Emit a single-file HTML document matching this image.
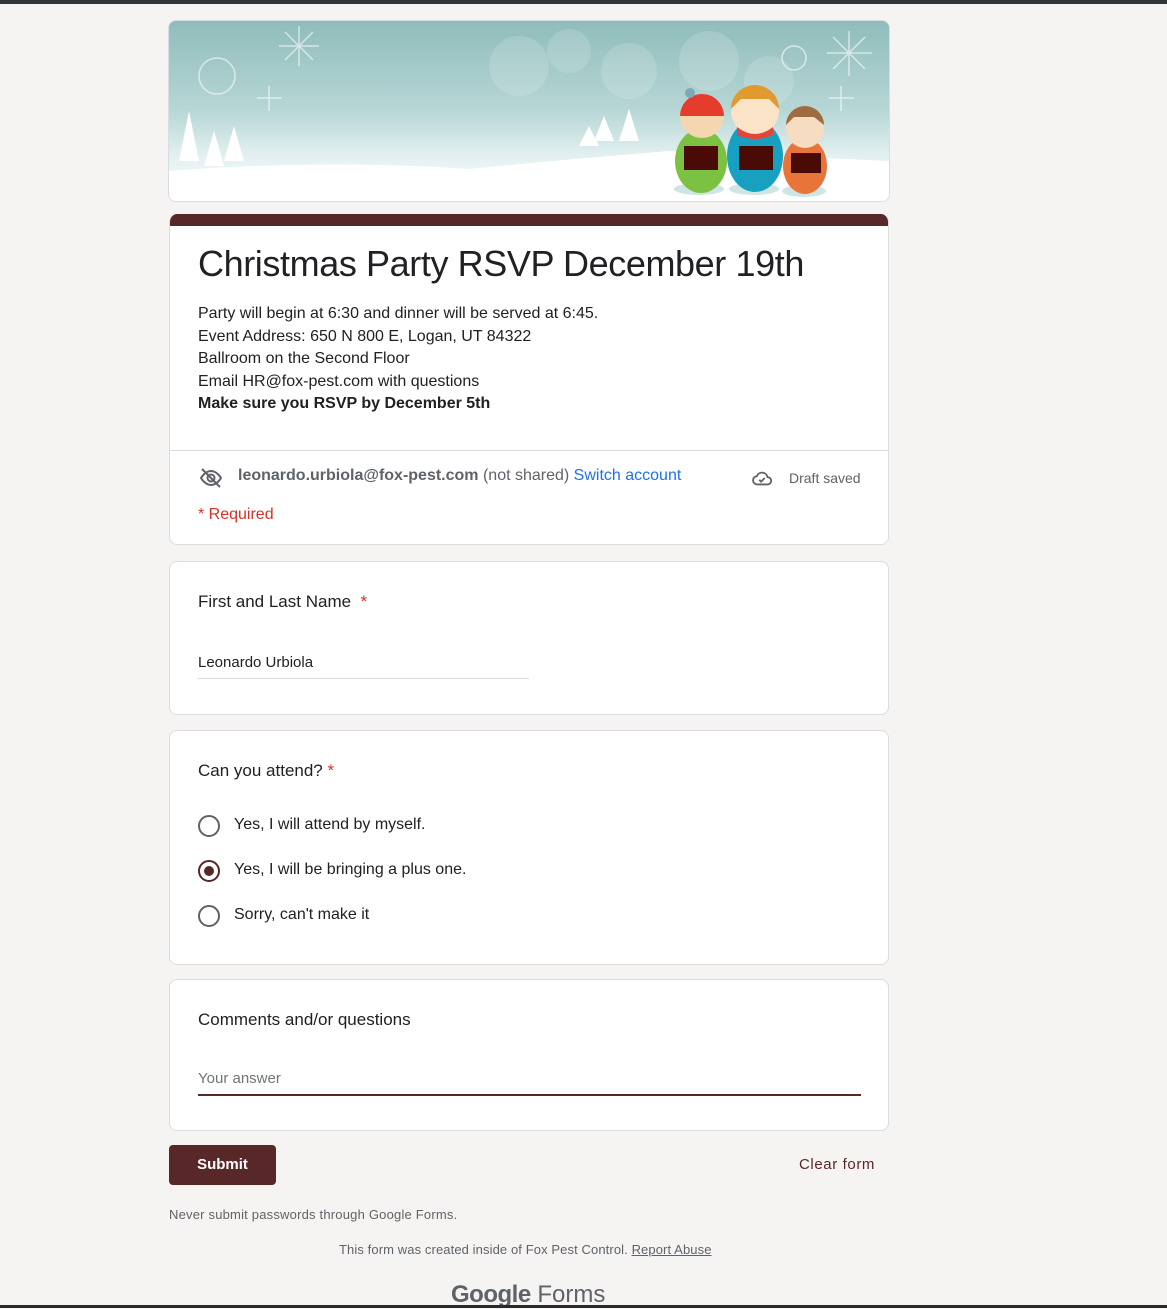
<!DOCTYPE html>
<html><head><style>
body{margin:0;background:#f6f4f2;font-family:"Liberation Sans",sans-serif;color:#202124;width:1167px;height:1308px;position:relative;overflow:hidden}
.top{position:absolute;left:0;top:0;width:1167px;height:4px;background:#343538}
.bot{position:absolute;left:0;top:1305px;width:1167px;height:3px;background:#2a2a2c}
.hdr{position:absolute;left:168px;top:20px;width:720px;height:180px;border:1px solid #dadce0;border-radius:8px;overflow:hidden;background:linear-gradient(#8fbcbb 0%,#b7d7d6 50%,#e3f0f0 75%,#fff 100%)}
.card{position:absolute;left:169px;width:718px;background:#fff;border:1px solid #dadce0;border-radius:8px}
.a{position:absolute;font-size:16px}
.req{color:#d93025}
.radio{position:absolute;left:28px;width:18px;height:18px;border:2px solid #5f6368;border-radius:50%}
</style></head><body>
<div class="top"></div>
<div class="hdr">
<svg width="720" height="180" style="position:absolute;left:0;top:0">
<g fill="#fff" opacity=".15"><circle cx="350" cy="45" r="30"/><circle cx="400" cy="30" r="22"/><circle cx="460" cy="50" r="28"/><circle cx="540" cy="40" r="30"/><circle cx="600" cy="60" r="25"/></g>
<path d="M0 150 Q150 138 300 148 Q380 140 500 130 L720 140 L720 180 L0 180Z" fill="#fff"/>
<g fill="#fff"><polygon points="20,90 10,140 30,140"/><polygon points="45,110 35,145 55,145"/><polygon points="65,105 55,140 75,140"/><polygon points="420,105 410,125 430,125"/><polygon points="435,95 425,120 445,120"/><polygon points="460,88 450,120 470,120"/></g>
<g stroke="#fff" stroke-width="1.5" fill="none" opacity=".6"><circle cx="48" cy="55" r="18"/><path d="M130 5v40M110 25h40M116 11l28 28M144 11l-28 28"/><path d="M100 65v25M88 77h25"/><circle cx="625" cy="37" r="12"/><path d="M680 10v45M658 32h45M664 16l32 32M696 16l-32 32"/><path d="M672 65v25M660 77h25"/></g>
<ellipse cx="530" cy="168" rx="25" ry="6" fill="#cfe5e4"/><ellipse cx="585" cy="168" rx="25" ry="6" fill="#cfe5e4"/><ellipse cx="635" cy="170" rx="22" ry="6" fill="#cfe5e4"/>
<ellipse cx="532" cy="140" rx="26" ry="32" fill="#7cc142"/><ellipse cx="586" cy="135" rx="28" ry="36" fill="#17a0bf"/><ellipse cx="636" cy="145" rx="22" ry="28" fill="#e8743a"/>
<circle cx="533" cy="95" r="22" fill="#f4d6b0"/><path d="M511 95 A22 22 0 0 1 555 95Z" fill="#e53c2e"/><circle cx="521" cy="72" r="5" fill="#7ea8b8"/>
<circle cx="586" cy="90" r="24" fill="#fbe3c8"/><path d="M562 88 A24 24 0 0 1 610 88 L600 78 L572 78Z" fill="#e09a30"/><path d="M568 106 Q586 120 604 106 L604 114 Q586 122 568 114Z" fill="#e4453a"/>
<circle cx="636" cy="108" r="19" fill="#f6dcc0"/><path d="M617 104 A19 19 0 0 1 655 104 L645 96 L625 96Z" fill="#9e6b42"/>
<rect x="515" y="125" width="34" height="24" fill="#4a0b06"/><rect x="570" y="125" width="34" height="24" fill="#4a0b06"/><rect x="622" y="132" width="30" height="20" fill="#4a0b06"/>
</svg></div>

<div class="card" style="top:214px;height:330px;border-top:none;overflow:hidden">
<div style="height:12px;background:#572827"></div>
<div class="a" style="left:28px;top:29px;font-size:36px;letter-spacing:-0.4px">Christmas Party RSVP December 19th</div>
<div class="a" style="left:28px;top:89px;line-height:22.5px">Party will begin at 6:30 and dinner will be served at 6:45.<br>Event Address: 650 N 800 E, Logan, UT 84322<br>Ballroom on the Second Floor<br>Email HR@fox-pest.com with questions<br><b>Make sure you RSVP by December 5th</b></div>
<div style="position:absolute;left:0;top:236px;width:718px;border-top:1px solid #dadce0"></div>
<svg class="a" style="left:28px;top:252px" width="26" height="24" viewBox="0 0 24 24" fill="none" stroke="#5f6368" stroke-width="2"><path d="M2 12s4-7 10-7 10 7 10 7-4 7-10 7S2 12 2 12z"/><circle cx="12" cy="12" r="3.5"/><path d="M3 3l18 18"/></svg>
<div class="a" style="left:68px;top:253px;color:#5f6368"><b>leonardo.urbiola@fox-pest.com</b> (not shared) <span style="color:#1a73e8">Switch account</span></div>
<svg class="a" style="left:580px;top:253px" width="24" height="22" viewBox="0 0 24 24" fill="none" stroke="#5f6368" stroke-width="2"><path d="M7 19h11a4 4 0 0 0 0-8 6 6 0 0 0-11.5-1A4.5 4.5 0 0 0 7 19z"/><path d="M9 14l2 2 4-4"/></svg>
<div class="a" style="left:619px;top:256px;font-size:14px;color:#5f6368">Draft saved</div>
<div class="a req" style="left:28px;top:292px">* Required</div>
</div>

<div class="card" style="top:561px;height:152px">
<div class="a" style="left:28px;top:30px;font-size:17px">First and Last Name <span class="req">&nbsp;*</span></div>
<div class="a" style="left:28px;top:92px;font-size:15px">Leonardo Urbiola</div>
<div style="position:absolute;left:28px;top:116px;width:331px;border-top:1px solid #dadce0"></div>
</div>

<div class="card" style="top:730px;height:233px">
<div class="a" style="left:28px;top:30px;font-size:17px">Can you attend? <span class="req">*</span></div>
<div class="radio" style="top:84px"></div><div class="a" style="left:64px;top:85px">Yes, I will attend by myself.</div>
<div class="radio" style="top:129px;border-color:#572827"><div style="margin:4px;width:10px;height:10px;border-radius:50%;background:#572827"></div></div><div class="a" style="left:64px;top:130px">Yes, I will be bringing a plus one.</div>
<div class="radio" style="top:174px"></div><div class="a" style="left:64px;top:175px">Sorry, can't make it</div>
</div>

<div class="card" style="top:979px;height:150px">
<div class="a" style="left:28px;top:30px;font-size:17px">Comments and/or questions</div>
<div class="a" style="left:28px;top:90px;font-size:15px;color:#70757a">Your answer</div>
<div style="position:absolute;left:28px;top:114px;width:663px;border-top:2px solid #572827"></div>
</div>

<div style="position:absolute;left:169px;top:1145px;width:107px;height:40px;background:#572827;border-radius:4px;color:#fff;font-weight:bold;font-size:15px;line-height:40px;text-align:center">Submit</div>
<div class="a" style="left:799px;top:1156px;color:#572827;font-size:15px;letter-spacing:0.6px">Clear form</div>
<div class="a" style="left:169px;top:1207px;font-size:13px;color:#5f6368;letter-spacing:0.2px">Never submit passwords through Google Forms.</div>
<div class="a" style="left:339px;top:1242px;font-size:13px;color:#5f6368;letter-spacing:0.1px">This form was created inside of Fox Pest Control. <u>Report Abuse</u></div>
<div class="a" style="left:451px;top:1281px;font-size:24px;color:#5f6368"><span style="font-weight:bold;letter-spacing:-.5px">Google</span> Forms</div>
<div class="bot"></div>
</body></html>
